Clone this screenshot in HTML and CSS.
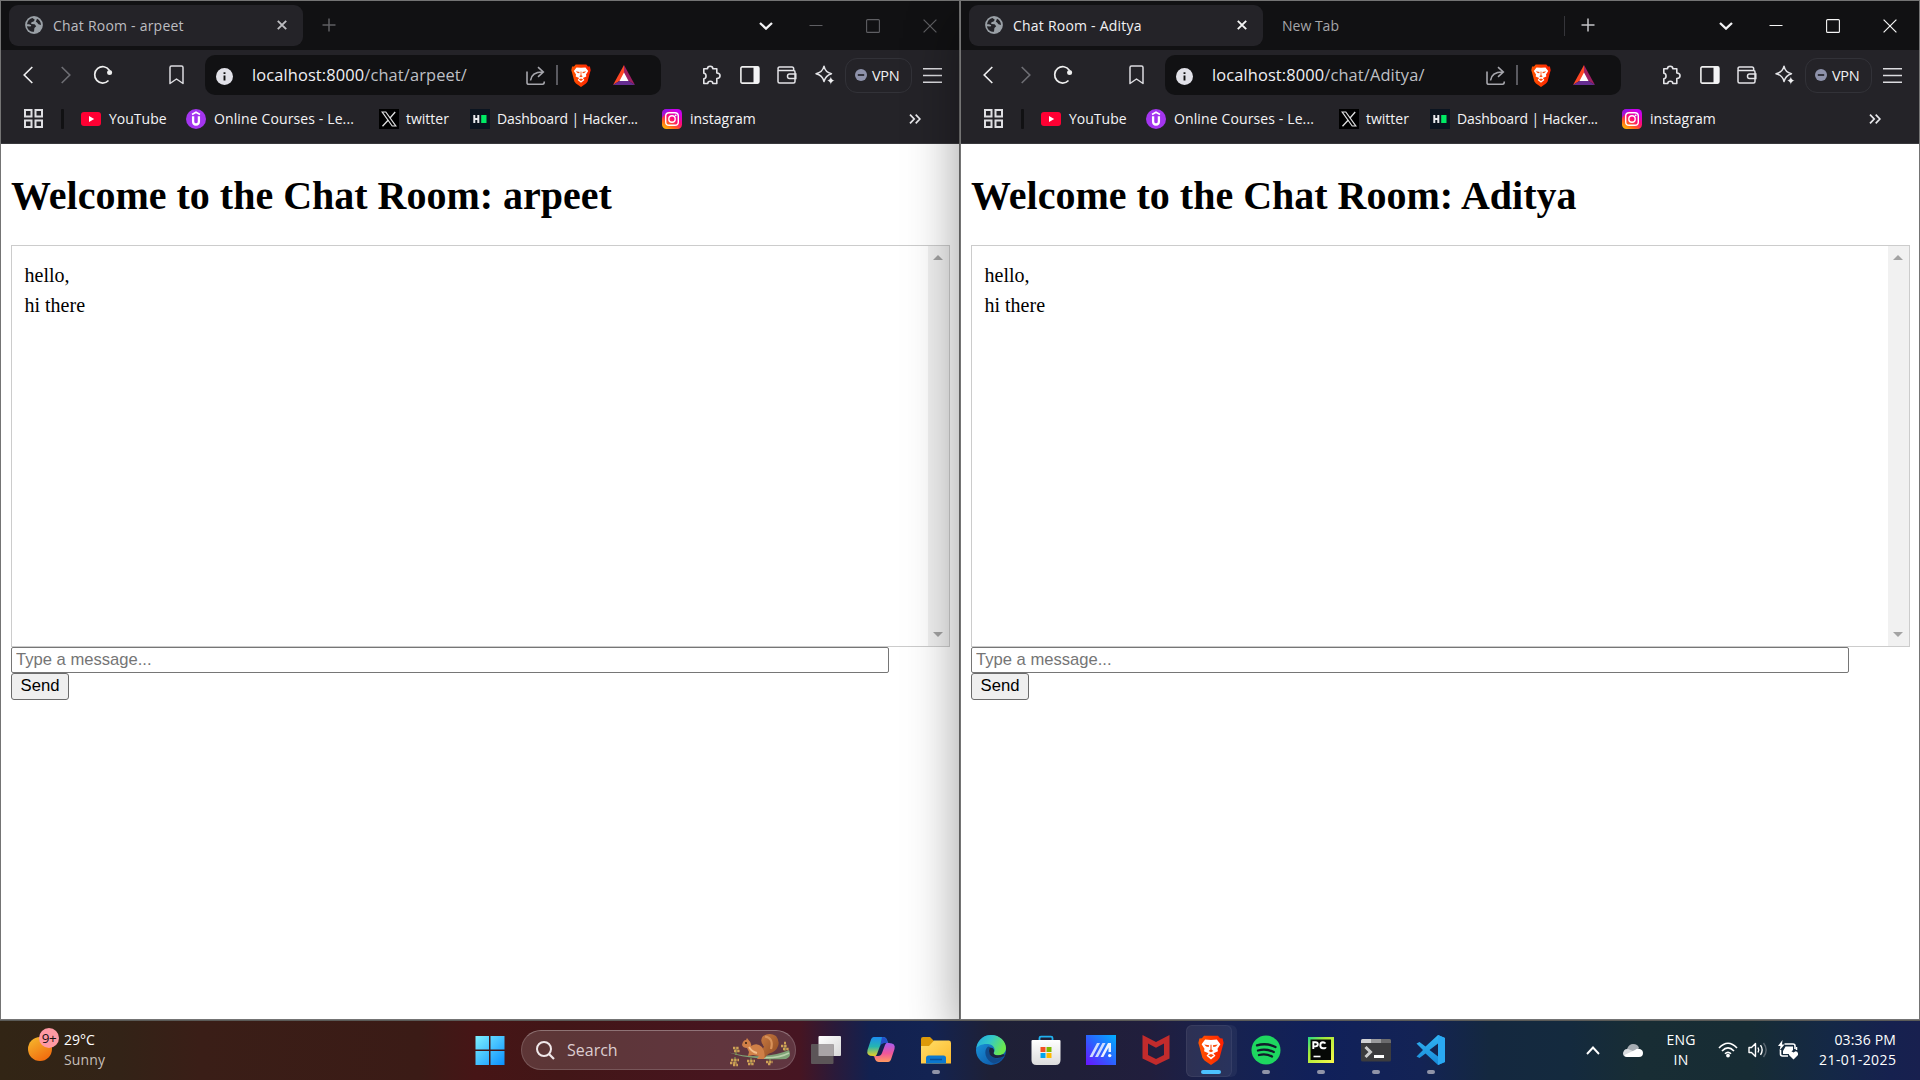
FILE: index.html
```html
<!DOCTYPE html>
<html lang="en">
<head>
<meta charset="utf-8">
<title>Chat Room</title>
<link rel="stylesheet" href="styles.css">
</head>
<body>
<svg class="defs" width="0" height="0">
  <defs>
    <linearGradient id="gInsta" x1="0" y1="1" x2="0.6" y2="0"><stop offset="0" stop-color="#ffd000"/><stop offset=".3" stop-color="#ff6a1a"/><stop offset=".6" stop-color="#ff0a78"/><stop offset="1" stop-color="#c800f0"/></linearGradient>
    <linearGradient id="gWin" x1="0" y1="0" x2="1" y2="1"><stop offset="0" stop-color="#7df0ff"/><stop offset="1" stop-color="#0a90ff"/></linearGradient>
    <linearGradient id="gSun" x1="0.2" y1="0" x2="0.8" y2="1"><stop offset="0" stop-color="#f5b52c"/><stop offset="1" stop-color="#f1660c"/></linearGradient>
    <linearGradient id="gFold" x1="0" y1="0" x2="1" y2="1"><stop offset="0" stop-color="#ffde6a"/><stop offset="1" stop-color="#fdb92b"/></linearGradient>
    <linearGradient id="gEdgeTop" x1="0" y1="0" x2="1" y2=".4"><stop offset="0" stop-color="#22a8e0"/><stop offset=".5" stop-color="#34c9c8"/><stop offset="1" stop-color="#6be84e"/></linearGradient>
    <linearGradient id="gEdge" x1="0" y1="0" x2="1" y2="1"><stop offset="0" stop-color="#1b9de2"/><stop offset="1" stop-color="#0c4a9c"/></linearGradient>
    <linearGradient id="gMa" x1="0" y1="1" x2="1" y2="0"><stop offset="0" stop-color="#6a12ff"/><stop offset=".5" stop-color="#2b63ff"/><stop offset="1" stop-color="#00b0ff"/></linearGradient>
    <linearGradient id="gBrave" x1="0" y1="0" x2="1" y2="0"><stop offset="0" stop-color="#ff5500"/><stop offset="1" stop-color="#ff2000"/></linearGradient>
    <linearGradient id="gCopA" x1="0" y1="0" x2="0" y2="1"><stop offset="0" stop-color="#1c8df0"/><stop offset=".5" stop-color="#25b5b0"/><stop offset="1" stop-color="#f0d020"/></linearGradient>
    <linearGradient id="gCopB" x1="0" y1="0" x2="0" y2="1"><stop offset="0" stop-color="#a45cf2"/><stop offset=".55" stop-color="#f0569a"/><stop offset="1" stop-color="#ff9a60"/></linearGradient>
    <linearGradient id="gPc" x1="0" y1="0" x2="1" y2="1"><stop offset="0" stop-color="#21d789"/><stop offset=".35" stop-color="#a8ea3a"/><stop offset="1" stop-color="#fcf84a"/></linearGradient>
    <linearGradient id="gStore" x1="0" y1="0" x2="0" y2="1"><stop offset="0" stop-color="#fff"/><stop offset="1" stop-color="#dcdcdc"/></linearGradient>
    <linearGradient id="gTask" x1="0" y1="0" x2="1" y2="1"><stop offset="0" stop-color="#fff"/><stop offset="1" stop-color="#d8d8d8"/></linearGradient>
    <linearGradient id="gCode" x1="0" y1="0" x2="0" y2="1"><stop offset="0" stop-color="#32b5f4"/><stop offset="1" stop-color="#1789d8"/></linearGradient>
    <linearGradient id="gTail" x1="0" y1="0" x2="1" y2="1"><stop offset="0" stop-color="#c87a42"/><stop offset="1" stop-color="#8f4a20"/></linearGradient>
  </defs>
  <symbol id="globe" viewBox="0 0 18 18"><circle cx="9" cy="9" r="8.900" fill="#9aa0a6"/><path d="M2 8.200C2.400 5 4.500 2.700 7.500 2.100L9.800 3.800 8.600 5.500 6.400 6.200 6.200 8 9.600 8.300 11.200 10.300 9.400 12 9 15.800C5.200 15.900 2.400 13.400 2 10.200L5.500 10.400 6.300 9.300 4 8.200Z" fill="#242328"/><path d="M12 2.700C14.500 3.900 16 6.200 16 9L13.500 8.200 11.800 6.300 10.800 5.800Z" fill="#242328"/></symbol>
  <symbol id="tabx" viewBox="0 0 10 10"><path d="M.8.8 9.200 9.200M9.200.8.8 9.200" stroke="currentColor" stroke-width="1.900" fill="none"/></symbol>
  <symbol id="plus" viewBox="0 0 14 14"><path d="M7 .5V13.500M.5 7H13.500" stroke="currentColor" stroke-width="1.500"/></symbol>
  <symbol id="chev" viewBox="0 0 14 8"><path d="M1 1 7 6.600 13 1" stroke="#f2f2f4" stroke-width="2.300" fill="none"/></symbol>
  <symbol id="min" viewBox="0 0 14 14"><path d="M.5 6.500H13.500" stroke="currentColor"/></symbol>
  <symbol id="max" viewBox="0 0 14 14"><rect x=".6" y=".6" width="12.800" height="12.800" rx="1" fill="none" stroke="currentColor" stroke-width="1.100"/></symbol>
  <symbol id="close" viewBox="0 0 14 14"><path d="M.6.6 13.400 13.400M13.400.6.6 13.400" stroke="currentColor" stroke-width="1.200"/></symbol>
  <symbol id="back" viewBox="0 0 10 18"><path d="M9.300 1 1.200 9 9.300 17" stroke="currentColor" stroke-width="1.600" fill="none"/></symbol>
  <symbol id="fwd" viewBox="0 0 10 18"><path d="M.7 1 8.800 9 .7 17" stroke="currentColor" stroke-width="1.600" fill="none"/></symbol>
  <symbol id="reload" viewBox="0 0 20 20"><path d="M15.500 15.500A8 8.200 0 1 1 16.300 5.200" stroke="#eee" stroke-width="1.700" fill="none"/><circle cx="16.600" cy="7.400" r="2.500" fill="#eee"/></symbol>
  <symbol id="mark" viewBox="0 0 15 20"><path d="M1 2.500Q1 1 2.500 1H12.500Q14 1 14 2.500V18.500L7.500 14 1 18.500Z" stroke="#dcdce0" stroke-width="1.500" stroke-linejoin="round" fill="none"/></symbol>
  <symbol id="info" viewBox="0 0 17 17"><circle cx="8.500" cy="8.500" r="8.500" fill="#e1e1e8"/><path d="M8.500 7.500V12.500M8.500 4.300V6.100" stroke="#111" stroke-width="1.900"/></symbol>
  <symbol id="share" viewBox="0 0 20 20"><path d="M1 5.500V16.500Q1 18.300 2.800 18.300H16.500Q18.300 18.300 18.300 15.500M4.500 14.500Q5.500 6 16.500 6M12 1.200 17.300 6 12 10.800" stroke="#a6a6ac" stroke-width="1.600" fill="none"/></symbol>
  <symbol id="brave" viewBox="0 0 20 23"><path d="M4.700.5H15.300L17 2.400 18.900 2.600 19.700 6.200 19 8.500 16.600 17.500 15 19.600 10 23 5 19.600 3.400 17.500 1 8.500.3 6.200 1.100 2.600 3 2.400Z" fill="url(#gBrave)"/><path d="M10 3.800 14.500 3.500 17.200 7 15 10.500 15.300 12.500 11.900 14 13.400 15.900 10 18.800 6.600 15.900 8.100 14 4.700 12.500 5 10.500 2.800 7 5.500 3.500Z" fill="#fff"/><path d="M4.800 7.200 8.600 7.900 8.200 9.200Q6.200 9.300 4.800 7.200ZM15.200 7.200 11.400 7.900 11.800 9.200Q13.800 9.300 15.200 7.200ZM8.200 12.200 10 13.200 11.800 12.200 10.400 11.200V7.500H9.600V11.200ZM7.800 15.500 10 14.500 12.200 15.500 10 17Z" fill="#fb4a0a"/></symbol>
  <symbol id="bat" viewBox="0 0 22 20"><path d="M11 0 0 20 11 13Z" fill="#ff4724"/><path d="M11 0 22 20 11 13Z" fill="#9e1f63"/><path d="M0 20H22L11 13Z" fill="#662d91"/><path d="M11 7.500 6.500 16H15.500Z" fill="#fff"/></symbol>
  <symbol id="puzzle" viewBox="0 0 20 20"><path d="M2.500 3.500H6.200C6.200.3 11.500.3 11.500 3.500H15.500V7.800C19.800 8 19.800 13 15.500 13.300V18.300H11.500C11.500 15.300 6.500 15.300 6.500 18.300H2.500V13.500C5.500 13.300 5.500 8.300 2.500 8Z" transform="translate(.3 .2)" stroke="#e4e4e8" stroke-width="1.600" stroke-linejoin="round" fill="none"/></symbol>
  <symbol id="side" viewBox="0 0 20 18"><rect x=".9" y=".9" width="18" height="16.200" rx="1.300" fill="none" stroke="#eee" stroke-width="1.600"/><path d="M13.500 1H19V17H13.500Z" fill="#f4f4f6"/></symbol>
  <symbol id="wallet" viewBox="0 0 20 18"><path d="M1 4V15.500Q1 17 2.500 17H16.500Q18 17 18 15.500V6Q18 4.600 16.500 4.600H2Q1 4.600 1 3 1 1 2.500 1H15Q16.700 1 16.700 3V4.600M18.800 8H12.500Q10.500 8 10.500 10.200T12.500 12.500H18.800Z" stroke="#e4e4e8" stroke-width="1.500" fill="none"/></symbol>
  <symbol id="spark" viewBox="0 0 20 20"><path d="M9 1.200Q10.200 7.500 16.500 8.700 10.500 10.500 9 16.500 7.500 10 1 8.700 7.500 7.500 9 1.200Z" stroke="#e4e4e8" stroke-width="1.500" stroke-linejoin="round" fill="none"/><path d="M15.800 11.500Q16.500 15 19.600 15.600 16.500 16.300 15.800 19.700 15.100 16.300 12 15.600 15.100 15 15.800 11.500Z" fill="#f0f0f2" stroke="#242328" stroke-width=".4"/></symbol>
  <symbol id="minus" viewBox="0 0 12 12"><circle cx="6" cy="6" r="6" fill="#8e92ab"/><path d="M2.800 6H9.200" stroke="#1c1c22" stroke-width="1.600"/></symbol>
  <symbol id="menu" viewBox="0 0 19 15"><path d="M0 .8H19M0 7.500H19M0 14.200H19" stroke="#dcdce0" stroke-width="1.400"/></symbol>
  <symbol id="grid" viewBox="0 0 19 19"><path d="M1 1H7.500V7.500H1ZM11.500 1H18V7.500H11.500ZM1 11.500H7.500V18H1ZM11.500 11.500H18V18H11.500Z" stroke="#dfdfe3" stroke-width="2" fill="none"/></symbol>
  <symbol id="yt" viewBox="0 0 20 14"><rect width="20" height="14" rx="3" fill="#f03"/><path d="M8 4V10L13.200 7Z" fill="#fff"/></symbol>
  <symbol id="udemy" viewBox="0 0 20 20"><circle cx="10" cy="10" r="10" fill="#a435f0"/><path d="M6 5.500 10 3.300 14 5.500" stroke="#fff" stroke-width="1.700" fill="none"/><path d="M7.100 7.300V12.500Q7.100 15.500 10 15.500T12.900 12.500V7.300" stroke="#fff" stroke-width="2.300" fill="none"/></symbol>
  <symbol id="xlogo" viewBox="0 0 20 20"><path d="M0 0H20V20H0Z" fill="#000"/><path d="M3.200 3H6.800L16.800 17H13.200Z" stroke="#ddd" stroke-width="1.200" fill="none"/><path d="M16.200 3 10.800 9.200M9.300 11 3.500 17.300" stroke="#ddd" stroke-width="1.300"/></symbol>
  <symbol id="hr" viewBox="0 0 20 20"><path d="M0 0H20V20H0Z" fill="#0b1420"/><path d="M4.300 6V14M8.300 6V14M4.500 10H8.500" stroke="#e8eaee" stroke-width="2"/><path d="M11.200 6H16.500V14H11.200Z" fill="#00ea64"/></symbol>
  <symbol id="insta" viewBox="0 0 20 20"><rect width="20" height="20" rx="4.500" fill="url(#gInsta)"/><path d="M0 5Q0 0 5 0H10Q4 3 0 9Z" fill="#7a18ff" opacity=".7"/><rect x="3.700" y="3.700" width="12.600" height="12.600" rx="3.400" fill="none" stroke="#fff" stroke-width="1.400"/><circle cx="10" cy="10" r="3.200" fill="none" stroke="#fff" stroke-width="1.400"/><circle cx="13.700" cy="6.300" r=".9" fill="#fff"/></symbol>
  <symbol id="more" viewBox="0 0 12 10"><path d="M1 .6 5.200 5 1 9.400M6.700.6 10.900 5 6.700 9.400" stroke="#e8e8ec" stroke-width="1.700" fill="none"/></symbol>
</svg>

<main class="desktop">
  <section class="window inactive">
    <div class="tabs">
      <div class="tab"><svg class="i-globe"><use href="#globe"/></svg><span class="title">Chat Room - arpeet</span><svg class="i-tabx"><use href="#tabx"/></svg></div>
      <svg class="i-plus"><use href="#plus"/></svg>
      <div class="controls"><svg class="i-chev"><use href="#chev"/></svg><svg class="i-ctl"><use href="#min"/></svg><svg class="i-ctl"><use href="#max"/></svg><svg class="i-ctl"><use href="#close"/></svg></div>
    </div>
    <div class="toolbar">
      <svg class="i-back"><use href="#back"/></svg><svg class="i-fwd"><use href="#fwd"/></svg><svg class="i-reload"><use href="#reload"/></svg><svg class="i-mark"><use href="#mark"/></svg>
      <div class="address"><svg class="i-info"><use href="#info"/></svg><span class="url">localhost:8000<span class="path">/chat/arpeet/</span></span><svg class="i-share"><use href="#share"/></svg><i class="bar"></i><svg class="i-brave"><use href="#brave"/></svg><svg class="i-bat"><use href="#bat"/></svg></div>
      <div class="actions"><svg class="i-puzzle"><use href="#puzzle"/></svg><svg class="i-side"><use href="#side"/></svg><svg class="i-side"><use href="#wallet"/></svg><svg class="i-spark"><use href="#spark"/></svg>
      <div class="vpn"><svg class="i-minus"><use href="#minus"/></svg><span>VPN</span></div><svg class="i-menu"><use href="#menu"/></svg></div>
    </div>
    <div class="bookmarks">
      <svg class="i-grid"><use href="#grid"/></svg><i class="sep"></i>
      <a class="bm b1"><svg class="i-yt"><use href="#yt"/></svg><span>YouTube</span></a>
      <a class="bm b2"><svg class="i-fav"><use href="#udemy"/></svg><span>Online Courses - Le...</span></a>
      <a class="bm b3"><svg class="i-fav"><use href="#xlogo"/></svg><span>twitter</span></a>
      <a class="bm b4"><svg class="i-fav"><use href="#hr"/></svg><span>Dashboard | Hacker...</span></a>
      <a class="bm b5"><svg class="i-fav"><use href="#insta"/></svg><span>instagram</span></a>
      <svg class="i-more"><use href="#more"/></svg>
    </div>
    <div class="page">
      <h1>Welcome to the Chat Room: arpeet</h1>
      <div class="log"><div class="lines"><p>hello,</p><p>hi there</p></div><div class="scroll"><i class="up"></i><i class="down"></i></div></div>
      <input class="message" type="text" placeholder="Type a message...">
      <button class="send">Send</button>
    </div>
  </section>

  <section class="window active">
    <div class="tabs">
      <div class="tab"><svg class="i-globe"><use href="#globe"/></svg><span class="title">Chat Room - Aditya</span><svg class="i-tabx"><use href="#tabx"/></svg></div>
      <div class="newtab">New Tab</div>
      <svg class="i-plus"><use href="#plus"/></svg>
      <div class="controls"><svg class="i-chev"><use href="#chev"/></svg><svg class="i-ctl"><use href="#min"/></svg><svg class="i-ctl"><use href="#max"/></svg><svg class="i-ctl"><use href="#close"/></svg></div>
    </div>
    <div class="toolbar">
      <svg class="i-back"><use href="#back"/></svg><svg class="i-fwd"><use href="#fwd"/></svg><svg class="i-reload"><use href="#reload"/></svg><svg class="i-mark"><use href="#mark"/></svg>
      <div class="address"><svg class="i-info"><use href="#info"/></svg><span class="url">localhost:8000<span class="path">/chat/Aditya/</span></span><svg class="i-share"><use href="#share"/></svg><i class="bar"></i><svg class="i-brave"><use href="#brave"/></svg><svg class="i-bat"><use href="#bat"/></svg></div>
      <div class="actions"><svg class="i-puzzle"><use href="#puzzle"/></svg><svg class="i-side"><use href="#side"/></svg><svg class="i-side"><use href="#wallet"/></svg><svg class="i-spark"><use href="#spark"/></svg>
      <div class="vpn"><svg class="i-minus"><use href="#minus"/></svg><span>VPN</span></div><svg class="i-menu"><use href="#menu"/></svg></div>
    </div>
    <div class="bookmarks">
      <svg class="i-grid"><use href="#grid"/></svg><i class="sep"></i>
      <a class="bm b1"><svg class="i-yt"><use href="#yt"/></svg><span>YouTube</span></a>
      <a class="bm b2"><svg class="i-fav"><use href="#udemy"/></svg><span>Online Courses - Le...</span></a>
      <a class="bm b3"><svg class="i-fav"><use href="#xlogo"/></svg><span>twitter</span></a>
      <a class="bm b4"><svg class="i-fav"><use href="#hr"/></svg><span>Dashboard | Hacker...</span></a>
      <a class="bm b5"><svg class="i-fav"><use href="#insta"/></svg><span>instagram</span></a>
      <svg class="i-more"><use href="#more"/></svg>
    </div>
    <div class="page">
      <h1>Welcome to the Chat Room: Aditya</h1>
      <div class="log"><div class="lines"><p>hello,</p><p>hi there</p></div><div class="scroll"><i class="up"></i><i class="down"></i></div></div>
      <input class="message" type="text" placeholder="Type a message...">
      <button class="send">Send</button>
    </div>
  </section>
</main>

<footer class="taskbar">
  <div class="weather">
    <div class="sun"><svg width="24" height="24" viewBox="0 0 24 24"><circle cx="12" cy="12" r="12" fill="url(#gSun)"/></svg><span class="badge">9+</span></div>
    <div class="wtext"><div>29°C</div><div class="cond">Sunny</div></div>
  </div>
  <div class="apps">
    <div class="slot"><svg class="ic" viewBox="0 0 30 30"><path d="M.5 1H14V14.500H.5ZM15.500 1H29.500V14.500H15.500ZM.5 16H14V30H.5ZM15.500 16H29.500V30H15.500Z" fill="url(#gWin)"/></svg></div>
    <div class="search">
      <svg width="19" height="19" viewBox="0 0 19 19"><circle cx="8" cy="8" r="7" fill="none" stroke="#f0e8ea" stroke-width="2"/><path d="M13 13 18 18" stroke="#f0e8ea" stroke-width="2.200"/></svg>
      <span>Search</span>
      <svg class="squirrel" width="64" height="34" viewBox="0 0 64 34">
        <path d="M1 19.500Q18 24 34 23T61 17Q64 24 58 26 40 27 28 25 14 24 1 19.500Z" fill="#7fa377"/><path d="M30 24.500Q50 26 61 20" stroke="#b9d0aa" stroke-width="1.500" fill="none"/>
        <path d="M35 24Q33 18 36 13.500 31 8 35 3 42-1 48 3 52 8 50 13 48 19 41 20.500Q38 22 37 25Z" fill="url(#gTail)"/><path d="M37 3.500Q46 5 43 16" stroke="#d8925a" stroke-width="2.200" fill="none"/>
        <path d="M14 12Q15 7 18 7L19 5 20.500 7Q24 10 23 13 29 9 34 14 38 20 36 26H29L31 23 25 22 20 23 21 19 19 15Q15 15 14 12Z" fill="#cf7f47"/><path d="M21 14Q24 19 29 20" stroke="#f3bd8a" stroke-width="2" fill="none"/><circle cx="18" cy="10" r=".9" fill="#20120a"/>
        <path d="M8 22V16M7 24V30M23 25V31M42 26V30M57 18V12" stroke="#7e9a52" stroke-width="1.200"/>
        <path d="M5 15H11M6 18H12M3 27H11M2 30H9M5 32H10M19 28H27M20 31H26M38 29H45M40 31H43M53 13H59M55 16H61M56 10H58" stroke="#cfa155" stroke-width="2.400" stroke-dasharray="2.400 .8"/>
      </svg>
    </div>
    <div class="slot tv"><svg class="ic" viewBox="0 0 30 30"><rect x="7.500" y="1" width="22.500" height="20" rx="1" fill="url(#gTask)"/><rect x="0" y="9" width="22.500" height="20" rx="1" fill="#5c5558"/><path d="M7.500 9H22.500V21H7.500Z" fill="#a9a4a6"/></svg></div>
    <div class="slot"><svg class="ic" viewBox="0 0 30 30"><path d="M8 2H17Q20 2 21 5L22 8H18Q15 8 14 11L11 19Q10 22 7 21 0 21 1.500 15L4.500 6Q5.500 2 8 2Z" fill="url(#gCopA)"/><path d="M16 2Q20 2 21 5L22 8H18.500Q15.500 8 14 11Z" fill="#2450c8"/><path d="M22 27H13Q10 27 9 24L8 21H12Q15 21 16 18L19 10Q20 7 23 8 30 8 28.500 14L25.500 23Q24.500 27 22 27Z" fill="url(#gCopB)"/></svg></div>
    <div class="slot run"><svg class="ic" viewBox="0 0 30 30"><path d="M0 4Q0 2 2 2H9L13 6V14H0Z" fill="#dd9a0a"/><path d="M0 11H8L13 5.500H28Q30 5.500 30 8V28.500H0Z" fill="url(#gFold)"/><path d="M5 28.500V23Q5 20.500 7.500 20.500H22.500Q25 20.500 25 23V28.500Z" fill="#0b78cf"/><path d="M9 24.500H21" stroke="#07509a" stroke-width="1.500"/></svg></div>
    <div class="slot"><svg class="ic" viewBox="0 0 30 30"><circle cx="15" cy="15" r="15" fill="url(#gEdge)"/><path d="M.5 13C2 4 8.500 0 15 0 24 0 30 6.500 30 13 30 18 26 20.500 22 20.500 19 20.500 17 19.500 17.500 18 20 15.500 18.500 9.500 12 9 6 8.500 2 11 .5 13Z" fill="url(#gEdgeTop)"/><path d="M12 11.500C7 15 9 26 18 28.500Q24 27 27.500 22 17 26 13.500 18.500 12 14.500 14 12Z" fill="#124b8c"/><path d="M13.500 12.500Q11.500 20 17.500 22.500 23 24 28.500 21 29 19 27 19.300 23 21 19.500 20 17 19 17.700 17.500 19 15 16.500 13Z" fill="#1d2340"/></svg></div>
    <div class="slot"><svg class="ic" viewBox="0 0 30 30"><path d="M8.500 7V3Q8.500 1.700 10 1.700H20Q21.500 1.700 21.500 3V7" fill="none" stroke="#20b0ee" stroke-width="1.800"/><path d="M.5 6Q.5 5 1.500 5H28.500Q29.500 5 29.500 6V25Q29.500 30 24.500 30H5.500Q.5 30 .5 25Z" fill="url(#gStore)"/><path d="M9.500 12H14.500V17H9.500Z" fill="#f25022"/><path d="M15.500 12H20.500V17H15.500Z" fill="#7fba00"/><path d="M9.500 18H14.500V23H9.500Z" fill="#00a4ef"/><path d="M15.500 18H20.500V23H15.500Z" fill="#ffb900"/></svg></div>
    <div class="slot"><svg class="ic" viewBox="0 0 30 30"><path d="M0 0H30V30H0Z" fill="url(#gMa)"/><path d="M3.500 22 11 8H14L6.500 22ZM9 22 16.500 8H19.500L12 22Z" fill="#cfdcff"/><path d="M14.500 22 22 8H25V17H22.500V12.500L17.300 22Z" fill="#eef3ff"/><circle cx="23.700" cy="20.600" r="1.700" fill="#fff"/></svg></div>
    <div class="slot"><svg class="ic" viewBox="0 0 30 30"><path d="M1.500 0 15 7 28.500 0V23.500L15 30 1.500 23.500ZM7 8.500V20L15 24 23 20V8.500L15 12.800Z" fill="#c22b2c" fill-rule="evenodd"/></svg></div>
    <div class="slot current"><svg class="ic"><use href="#brave"/></svg></div>
    <div class="slot run"><svg class="ic" viewBox="0 0 30 30"><circle cx="15" cy="15" r="14.500" fill="#1ed760"/><path d="M6 10.300Q15.500 7.500 24.500 12M7 15.500Q15 13.200 22.800 17M8 20Q15 18.200 21 21.500" stroke="#111b2a" stroke-width="2.300" stroke-linecap="round" fill="none"/></svg></div>
    <div class="slot run"><svg class="ic" viewBox="0 0 30 30"><path d="M2 2H28V28H2Z" fill="url(#gPc)"/><path d="M4.500 4.500H25V25H4.500Z" fill="#060806"/><path d="M7.300 14V7.300H9.500Q11.800 7.300 11.800 9.300T9.500 11.400H7.300M19.500 8.500Q18.500 7.300 17 7.300 14.300 7.400 14.300 10.300T17 13.300 19.500 12.200" stroke="#fff" stroke-width="1.900" fill="none"/><path d="M7.500 21.500H14.500" stroke="#fff" stroke-width="1.600"/></svg></div>
    <div class="slot run"><svg class="ic" viewBox="0 0 30 30"><rect y="4" width="30" height="22.500" rx="1.500" fill="#3c3c3e"/><path d="M0 8V5.500Q0 4 1.500 4H10V8Z" fill="#d2d2d4"/><path d="M10 4H20V8H10Z" fill="#9a9a9c"/><path d="M20 4H28.500Q30 4 30 5.500V8H20Z" fill="#6b6b6d"/><path d="M4.500 12 9.500 17 4.500 22" stroke="#ccc" stroke-width="3" fill="none"/><path d="M13 21.500H23" stroke="#fff" stroke-width="3"/></svg></div>
    <div class="slot run"><svg class="ic" viewBox="0 0 30 30"><path d="M22 0 29 3V27L22 30 9.500 18.500 3.500 23 .5 21.500 7 15 .5 8.500 3.500 7 9.500 11.500ZM22 8.500 13.500 15 22 21.500Z" fill="url(#gCode)" fill-rule="evenodd"/><path d="M22 0 29 3V27L22 30Z" fill="#2aa8f2"/></svg></div>
  </div>
  <div class="tray">
    <svg class="t-chev" viewBox="0 0 14 9"><path d="M1 8 7 1.500 13 8" stroke="#fff" stroke-width="1.900" fill="none"/></svg>
    <svg class="t-cloud" viewBox="0 0 20 13"><path d="M4 5Q6 0 10 0 15 0 16 4L10 9 1 8Q1 5 4 5Z" fill="#a7adb3"/><path d="M4 13Q0 13 0 9 1 5 5 5L17 10Z" fill="#d9dcdf"/><path d="M4 13Q1.500 12.500 1.500 11L12 6Q14 4 17 5 20 6 20 9 20 13 16 13Z" fill="#fff"/></svg>
    <div class="lang"><div>ENG</div><div>IN</div></div>
    <svg class="t-wifi" viewBox="0 0 20 16"><path d="M1 6Q10-3.500 19 6M4 9Q10 2.700 16 9M7 11.800Q10 8.800 13 11.800" stroke="#fff" stroke-width="1.600" fill="none"/><circle cx="10" cy="13.600" r="1.900" fill="#fff"/></svg>
    <svg class="t-vol" viewBox="0 0 20 16"><path d="M1 5.500H3.500L7.500 1.500V14.500L3.500 10.500H1Z" stroke="#fff" stroke-width="1.400" fill="none" stroke-linejoin="round"/><path d="M10 5.500Q11.500 8 10 10.500M12.500 3.200Q15.800 8 12.500 12.800" stroke="#fff" stroke-width="1.400" fill="none"/><path d="M15.500 1Q20.800 8 15.500 15" stroke="#5a6670" stroke-width="1.400" fill="none"/></svg>
    <svg class="t-bat" viewBox="0 0 20 20"><path d="M6.500 4H15Q17 4 17 6V9M2.500 10V14Q2.500 16 4.500 16H10" stroke="#fff" stroke-width="1.600" fill="none"/><path d="M7.500 6.500H15V10L11 14H5V11Z" fill="#fff"/><path d="M4.500 0 0 6H2.500L1.500 10.500 6.500 4.500H4Z" fill="#fff"/><path d="M15.500 19.500 11 15Q10.500 11.500 13.500 11.300L15.500 12.500 17.500 11.300Q20.500 11.500 20 15Z" fill="#fff"/><path d="M18.500 7V10" stroke="#fff" stroke-width="1.500"/></svg>
    <div class="clock"><div class="time">03:36 PM</div><div class="date">21-01-2025</div></div>
  </div>
</footer>
</body>
</html>
```
FILE: styles.css
```css
* { box-sizing: border-box; }
body { margin: 0; width: 1920px; height: 1080px; overflow: hidden; background: #fff; font-family: "Open Sans", "Noto Sans", sans-serif; }
svg { display: block; flex: none; }
.defs { position: absolute; }
.desktop { display: flex; height: 1020px; overflow: hidden; }

/* browser window */
.window { width: 960px; height: 1020px; border: 1px solid #747474; display: flex; flex-direction: column; background: #fff; }
.active { box-shadow: 0 20px 50px rgba(0, 0, 0, .4); }
.tabs { height: 49px; background: #111113; display: flex; align-items: center; padding-left: 8px; color: #f2f2f4; }
.tab { width: 294px; height: 41px; margin-bottom: 1px; background: #242328; border-radius: 9px; display: flex; align-items: center; padding: 0 16px 0 16px; font-size: 14px; }
.title { margin-left: 10px; white-space: nowrap; letter-spacing: .22px; }
.i-globe { width: 18px; height: 18px; }
.i-tabx { width: 10px; height: 10px; margin-left: auto; color: #f4f4f4; }
.i-plus { width: 14px; height: 14px; margin: 0 0 1px 19px; color: #c4c4c8; }
.controls { margin-left: auto; display: flex; align-items: center; padding-right: 22px; }
.i-chev { width: 14px; height: 8px; margin-right: 36px; }
.i-ctl { width: 14px; height: 14px; margin-right: 43px; color: #f6f6f6; }
.i-ctl:last-child { margin-right: 0; }
.inactive .title, .inactive .i-tabx { color: #bdbdc1; }
.inactive .i-plus, .inactive .i-ctl { color: #5f5f63; }
.newtab { width: 302px; height: 20px; line-height: 20px; padding-left: 19px; border-right: 1px solid #35353a; font-size: 14px; color: #a6a6aa; }
.active .i-plus { margin-left: 16px; }

.toolbar { height: 50px; background: #242328; display: flex; align-items: center; color: #f0f0f2; }
.i-back { width: 10px; height: 18px; margin-left: 22px; }
.i-fwd { width: 10px; height: 18px; margin-left: 28px; color: #6e6e74; }
.i-reload { width: 20px; height: 20px; margin-left: 22px; }
.i-mark { width: 15px; height: 20px; margin-left: 56px; }
.address { width: 456px; height: 40px; margin-left: 21px; background: #111113; border-radius: 10px; display: flex; align-items: center; padding-left: 11px; }
.i-info { width: 17px; height: 17px; margin-top: 2px; }
.url { width: 274px; margin-left: 19px; font-size: 16.400px; line-height: 24px; white-space: nowrap; color: #f0f0f4; letter-spacing: .13px; }
.path { color: #bfc0c6; }
.i-share { width: 20px; height: 20px; margin: 1px 0 0 0; }
.bar { width: 2px; height: 20px; margin-left: 10px; background: #5a5a60; }
.i-brave { width: 20px; height: 23px; margin-left: 13px; }
.i-bat { width: 22px; height: 20px; margin-left: 22px; }
.actions { display: flex; align-items: center; margin-left: 40px; }
.i-puzzle { width: 20px; height: 20px; }
.i-side { width: 20px; height: 18px; margin-left: 18px; }
.i-side:nth-child(2) { margin-left: 19px; }
.i-side:nth-child(3) { margin-left: 17px; }
.i-spark { width: 20px; height: 20px; margin-left: 18px; }
.vpn { width: 67px; height: 35px; margin-left: 10px; border: 1px solid #323238; border-radius: 12px; display: flex; align-items: center; padding-left: 9px; font-size: 14.500px; letter-spacing: -.3px; }
.vpn span { margin-left: 5px; }
.i-minus { width: 12px; height: 12px; }
.i-menu { width: 19px; height: 15px; margin-left: 11px; }

.bookmarks { height: 44px; padding-bottom: 6px; background: #242328; border-bottom: 1px solid #38383c; display: flex; align-items: center; color: #f4f4f6; font-size: 14px; }
.i-grid { width: 19px; height: 19px; margin-left: 23px; }
.sep { width: 3px; height: 20px; margin-left: 18px; background: #111113; border-radius: 1px; }
.bm { display: flex; align-items: center; white-space: nowrap; }
.b1 { margin-left: 17px; width: 105px; }
.b2 { width: 193px; letter-spacing: .12px; }
.b3 { width: 91px; }
.b4 { width: 192px; letter-spacing: -.15px; }
.bm span { margin-left: 8px; line-height: 20px; }
.b3 span, .b4 span { margin-left: 7px; }
.i-yt { width: 20px; height: 14px; }
.i-fav { width: 20px; height: 20px; }
.i-more { width: 12px; height: 10px; margin: 0 38px 0 auto; }

/* chat page */
.page { flex: 1; padding: 0 9px 0 10px; display: flex; flex-direction: column; align-items: flex-start; font-family: "Liberation Serif", serif; color: #000; }
h1 { margin: 29px 0 26px; font-size: 40px; line-height: 46px; font-weight: bold; white-space: nowrap; }
.log { align-self: stretch; height: 402px; border: 1px solid #ccc; display: flex; justify-content: space-between; }
.lines { padding: 14px 0 0 12.500px; font-size: 20px; line-height: 30px; }
.lines p { margin: 0; }
.scroll { width: 21px; background: #f1f1f1; display: flex; flex-direction: column; justify-content: space-between; align-items: center; padding: 9px 1px 9px 0; }
.up, .down { border: 5px solid transparent; border-top-width: 0; border-bottom: 5px solid #a3a3a3; }
.down { border-top: 5px solid #a3a3a3; border-bottom-width: 0; }
.message { width: 878px; height: 26px; margin: 0; padding: 0 4px; border: 1px solid #767676; border-radius: 2px; font: 16.600px "Liberation Sans", sans-serif; }
.message::placeholder { color: #757575; }
.send { width: 58px; height: 27px; padding: 0 0 2px; border: 1px solid #6b6b6b; border-radius: 3px; background: #efefef; color: #000; font: 16.670px "Liberation Sans", sans-serif; }

/* taskbar */
.taskbar { position: relative; height: 60px; display: flex; align-items: stretch; color: #fff; font-size: 14px; line-height: 20px; border-top: 1px solid #5b5b58;
  background: linear-gradient(90deg, #322515 0, #332317 120px, #3a1e17 200px, #3b1b16 420px, #461516 475px, #421617 560px, #47151f 720px, #461522 800px, #2a1a3a 835px, #122150 870px, #132352 930px, #1e2036 990px, #1f1f38 1070px, #211e3d 1150px, #172250 1230px, #10205a 1320px, #132355 1420px, #14283f 1490px, #142a3e 1570px, #182d34 1640px, #172c34 1750px, #142846 1830px, #16214f 1890px, #18204f 1920px); }
.weather { width: 462px; display: flex; padding-left: 28px; }
.sun { position: relative; width: 24px; padding-top: 16px; }
.badge { position: absolute; left: 11px; top: 7px; width: 20px; height: 20px; border-radius: 50%; background: #ff99a4; color: #191012; font-size: 13.500px; line-height: 20px; text-align: center; letter-spacing: -.5px; }
.wtext { margin-left: 12px; padding-top: 9px; }
.cond { color: #c6bfb9; letter-spacing: .15px; }
.apps { display: flex; align-items: center; }
.slot { position: relative; width: 55px; height: 59px; padding-bottom: 1px; display: flex; align-items: center; justify-content: center; }
.ic { width: 30px; height: 30px; }
.search { width: 275px; height: 40px; margin: 0 3px 1px 4px; border: 1px solid rgba(255, 255, 255, .16); border-top-color: rgba(255, 255, 255, .3); border-radius: 20px; background: rgba(255, 255, 255, .14); display: flex; align-items: center; padding-left: 14px; font-size: 16px; color: #dccdd0; }
.search span { margin-left: 12px; }
.squirrel { margin: 0 3px 0 auto; }
.tv { margin-left: -1px; }
.run::after, .current::after { content: ""; position: absolute; bottom: 6px; width: 8px; height: 4px; border-radius: 2px; background: #9094a8; }
.current::before { content: ""; position: absolute; left: 3px; top: 4px; width: 44px; height: 50px; border-radius: 6px; background: rgba(255, 255, 255, .08); border: 1px solid rgba(255, 255, 255, .06); box-shadow: 5px 0 0 rgba(255, 255, 255, .05); }
.current::after { width: 20px; background: #4cc2ff; }
.current .ic { position: relative; }
.tray { flex: 1; display: flex; align-items: center; padding: 0 24px 1px 0; }
.t-chev { width: 14px; height: 9px; margin-left: 128px; }
.t-cloud { width: 20px; height: 13px; margin-left: 23px; }
.lang { width: 40px; margin-left: 18px; text-align: center; letter-spacing: .15px; }
.t-wifi { width: 20px; height: 16px; margin-left: 17px; }
.t-vol { width: 20px; height: 16px; margin-left: 10px; }
.t-bat { width: 20px; height: 20px; margin-left: 10px; }
.clock { margin-left: auto; text-align: right; }
.time { letter-spacing: .15px; }
.date { letter-spacing: .43px; margin-right: -.4px; }
```
